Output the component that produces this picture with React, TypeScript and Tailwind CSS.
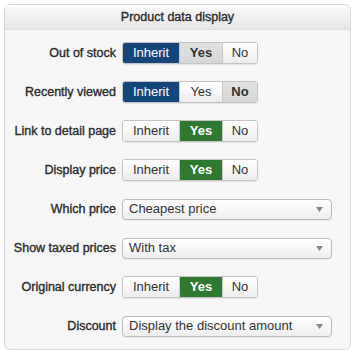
import React from 'react';

type Choice = 'Inherit' | 'Yes' | 'No';

const ROWS: { label: string; kind: 'toggle' | 'select'; value?: Choice; soft?: Choice; text?: string }[] = [
  { label: 'Out of stock', kind: 'toggle', value: 'Inherit', soft: 'Yes' },
  { label: 'Recently viewed', kind: 'toggle', value: 'Inherit', soft: 'No' },
  { label: 'Link to detail page', kind: 'toggle', value: 'Yes' },
  { label: 'Display price', kind: 'toggle', value: 'Yes' },
  { label: 'Which price', kind: 'select', text: 'Cheapest price' },
  { label: 'Show taxed prices', kind: 'select', text: 'With tax' },
  { label: 'Original currency', kind: 'toggle', value: 'Yes' },
  { label: 'Discount', kind: 'select', text: 'Display the discount amount' },
];

const Toggle = ({ value, soft }: { value?: Choice; soft?: Choice }) => {
  const opts: { name: Choice; w: string }[] = [
    { name: 'Inherit', w: 'w-[56px]' },
    { name: 'Yes', w: 'w-[43px]' },
    { name: 'No', w: 'w-[35px]' },
  ];
  return (
    <div className="flex h-[22px] rounded-[3px] border border-[#c4c4c4] overflow-hidden shadow-[0_1px_1px_rgba(0,0,0,0.08)]">
      {opts.map((o, i) => {
        let cls = 'bg-gradient-to-b from-white to-[#ececec] text-[#333]';
        if (value === o.name && o.name === 'Inherit') cls = 'bg-[#15467a] text-white';
        else if (value === o.name && o.name === 'Yes') cls = 'bg-[#2f7a30] text-white font-bold';
        else if (soft === o.name) cls = 'bg-gradient-to-b from-[#e2e2e2] to-[#d6d6d6] text-[#333] font-bold';
        return (
          <div
            key={o.name}
            className={`${o.w} flex items-center justify-center text-[13px] ${cls} ${i > 0 ? 'border-l border-[#c8c8c8]' : ''}`}
          >
            {o.name}
          </div>
        );
      })}
    </div>
  );
};

const Select = ({ text }: { text?: string }) => (
  <div className="w-[210px] h-[21px] flex items-center justify-between pl-[6px] pr-[8px] rounded-[4px] border border-[#b9b9b9] bg-gradient-to-b from-white to-[#ededed] text-[13px] text-[#333] shadow-[0_1px_1px_rgba(0,0,0,0.06)]">
    <span>{text}</span>
    <svg width="7" height="5" viewBox="0 0 7 5">
      <path d="M0 0h7L3.5 5z" fill="#888" />
    </svg>
  </div>
);

export default function App() {
  return (
    <div className="w-[359px] h-[358px] bg-white p-[4px] pr-[8px]" style={{ fontFamily: '"Liberation Sans", Arial, sans-serif' }}>
      <div className="h-[346px] rounded-[6px] border border-[#d8d8d8] bg-[#f6f6f6] overflow-hidden">
        <div className="h-[25px] flex items-center justify-center border-b border-[#dcdcdc] bg-gradient-to-b from-[#fafafa] to-[#e6e6e6] text-[12.5px] text-[#2a2a2a] [-webkit-text-stroke:0.35px_#2a2a2a]">
          Product data display
        </div>
        <div className="flex flex-col gap-[17px] pt-[12px]">
          {ROWS.map((r) => (
            <div key={r.label} className="flex items-center gap-[6px] h-[22px]">
              <div className="w-[111px] text-right text-[12.5px] text-[#2a2a2a] [-webkit-text-stroke:0.35px_#2a2a2a] whitespace-nowrap">
                {r.label}
              </div>
              {r.kind === 'toggle' ? <Toggle value={r.value} soft={r.soft} /> : <Select text={r.text} />}
            </div>
          ))}
        </div>
      </div>
    </div>
  );
}
